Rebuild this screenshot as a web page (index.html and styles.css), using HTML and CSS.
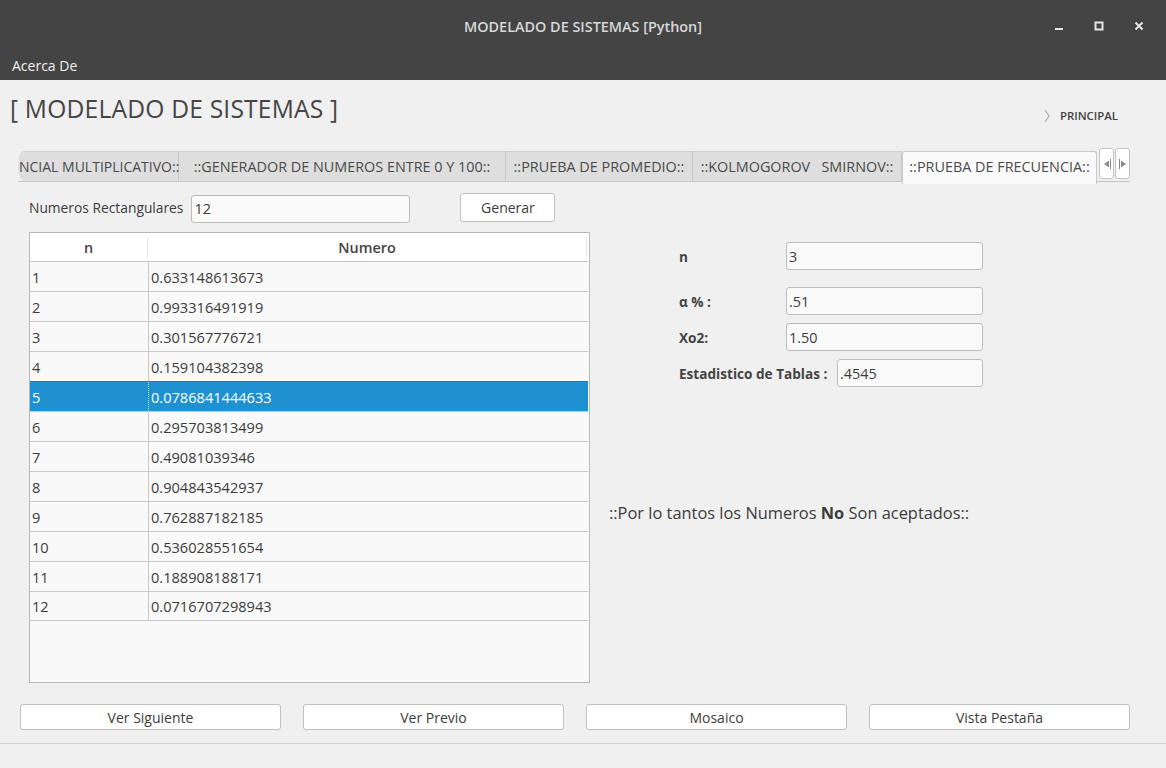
FILE: index.html
```html
<!DOCTYPE html>
<html>
<head>
<meta charset="utf-8">
<link rel="stylesheet" href="styles.css">
</head>
<body>
<div class="window">
  <div class="titlebar">
    <div class="title">MODELADO DE SISTEMAS [Python]</div>
    <div class="controls">
      <svg class="ctl" width="12" height="12" viewBox="0 0 12 12"><rect x="2" y="8" width="8" height="2" fill="#e6e6e6"/></svg>
      <svg class="ctl" width="12" height="12" viewBox="0 0 12 12"><rect x="2.5" y="2.5" width="7" height="7" fill="none" stroke="#e6e6e6" stroke-width="2"/></svg>
      <svg class="ctl" width="12" height="12" viewBox="0 0 12 12"><path d="M2.5 2.5 L9.5 9.5 M9.5 2.5 L2.5 9.5" stroke="#e6e6e6" stroke-width="2"/></svg>
    </div>
  </div>
  <div class="menubar"><span class="menu">Acerca De</span></div>

  <div class="main">
    <div class="head">
      <h1 class="heading">[ MODELADO DE SISTEMAS ]</h1>
      <div class="crumb">
        <svg width="6" height="14" viewBox="0 0 6 14"><path d="M1 1 L5 7 L1 13" fill="none" stroke="#b0b0b0" stroke-width="1.2"/></svg>
        <span>PRINCIPAL</span>
      </div>
    </div>

    <div class="tabbar">
      <div class="tabs">
        <div class="tab first">NCIAL MULTIPLICATIVO::</div>
        <div class="tab t2">::GENERADOR DE NUMEROS ENTRE 0 Y 100::</div>
        <div class="tab t3">::PRUEBA DE PROMEDIO::</div>
        <div class="tab t4">::KOLMOGOROV&nbsp;&nbsp;&nbsp;SMIRNOV::</div>
        <div class="tab active">::PRUEBA DE FRECUENCIA::</div>
      </div>
      <div class="scrollbtns">
        <div class="sbtn"><svg width="8" height="10" viewBox="0 0 8 10"><path d="M1 5 L6 1.5 L6 8.5 Z" fill="#8a8a8a"/><rect x="7" y="0" width="1" height="10" fill="#8a8a8a"/></svg></div>
        <div class="sbtn"><svg width="8" height="10" viewBox="0 0 8 10"><rect x="0" y="0" width="1" height="10" fill="#8a8a8a"/><path d="M2 1.5 L7 5 L2 8.5 Z" fill="#8a8a8a"/></svg></div>
      </div>
    </div>

    <div class="pane">
      <div class="leftcol">
        <div class="genrow">
          <label class="lbl">Numeros Rectangulares</label>
          <div class="field wide">12</div>
          <button class="btn gen">Generar</button>
        </div>
        <div class="table">
          <div class="thead">
            <div class="th c1">n</div>
            <div class="th c2">Numero</div>
          </div>
          <div class="tr"><div class="td c1">1</div><div class="td c2">0.633148613673</div></div>
          <div class="tr"><div class="td c1">2</div><div class="td c2">0.993316491919</div></div>
          <div class="tr"><div class="td c1">3</div><div class="td c2">0.301567776721</div></div>
          <div class="tr"><div class="td c1">4</div><div class="td c2">0.159104382398</div></div>
          <div class="tr sel"><div class="td c1">5</div><div class="td c2">0.0786841444633</div></div>
          <div class="tr"><div class="td c1">6</div><div class="td c2">0.295703813499</div></div>
          <div class="tr"><div class="td c1">7</div><div class="td c2">0.49081039346</div></div>
          <div class="tr"><div class="td c1">8</div><div class="td c2">0.904843542937</div></div>
          <div class="tr"><div class="td c1">9</div><div class="td c2">0.762887182185</div></div>
          <div class="tr"><div class="td c1">10</div><div class="td c2">0.536028551654</div></div>
          <div class="tr"><div class="td c1">11</div><div class="td c2">0.188908188171</div></div>
          <div class="tr"><div class="td c1">12</div><div class="td c2">0.0716707298943</div></div>
        </div>
      </div>
      <div class="rightcol">
        <div class="form">
          <div class="frow r1"><span class="flbl">n</span><div class="field fin">3</div></div>
          <div class="frow r2"><span class="flbl">α % :</span><div class="field fin">.51</div></div>
          <div class="frow r3"><span class="flbl">Xo2:</span><div class="field fin">1.50</div></div>
          <div class="frow r4"><span class="flbl">Estadistico de Tablas :</span><div class="field fin short">.4545</div></div>
        </div>
        <p class="msg">::Por lo tantos los Numeros <b>No</b> Son aceptados::</p>
      </div>
    </div>

    <div class="bottombtns">
      <button class="btn bb">Ver Siguiente</button>
      <button class="btn bb">Ver Previo</button>
      <button class="btn bb">Mosaico</button>
      <button class="btn bb">Vista Pestaña</button>
    </div>
  </div>
  <div class="status"></div>
</div>
</body>
</html>
```

FILE: styles.css
```css
* { box-sizing: border-box; }
html, body { margin: 0; padding: 0; }
body {
  width: 1166px;
  height: 768px;
  overflow: hidden;
  background: #f0f0f0;
  font-family: "Open Sans", "DejaVu Sans", sans-serif;
  color: #3c3c3c;
}
.window { display: flex; flex-direction: column; height: 768px; }

.titlebar {
  height: 52px;
  background: #444444;
  display: flex;
  align-items: center;
  justify-content: center;
  position: relative;
}
.title {
  color: #d8d8d8;
  font-size: 14.4px;
  font-weight: 600;
}
.controls {
  position: absolute;
  right: 21px;
  top: 20px;
  display: flex;
  gap: 28px;
}
.ctl { display: block; }

.menubar {
  height: 28px;
  background: #444444;
  display: flex;
  align-items: center;
  padding: 0 0 2px 12px;
}
.menu { color: #f0f0f0; font-size: 14px; }

.main { flex: 1; display: flex; flex-direction: column; }

.head {
  display: flex;
  justify-content: space-between;
  align-items: flex-start;
  height: 68px;
}
.heading {
  margin: 12px 0 0 10px;
  font-size: 24.6px;
  font-weight: 400;
  color: #454545;
  letter-spacing: 0.2px;
}
.crumb {
  margin: 28px 48px 0 0;
  display: flex;
  align-items: center;
  gap: 10px;
  font-size: 11.4px;
  font-weight: 600;
  color: #444;
}
.crumb svg { display: block; }

.tabbar {
  height: 34px;
  margin: 0 36px 0 18px;
  display: flex;
  align-items: flex-end;
  border-bottom: 1px solid #c4c4c4;
}
.tabs { display: flex; height: 30px; }
.tab {
  height: 30px;
  display: flex;
  align-items: center;
  font-size: 14.4px;
  color: #4a4a4a;
  background: #dedede;
  border-right: 1px solid #c8c8c8;
  border-top: 1px solid #d0d0d0;
  white-space: nowrap;
  padding: 0 6px 1px;
}
.tab.first {
  width: 161px;
  padding: 0 0 1px 1px;
  font-size: 14px;
  border-top-left-radius: 6px 15px;
  border-bottom-left-radius: 6px 15px;
}
.tab.t2 { width: 327px; justify-content: center; }
.tab.t3 { width: 187px; justify-content: center; }
.tab.t4 { width: 209px; justify-content: center; }
.tab.active {
  width: 195px;
  height: 33px;
  margin-bottom: -1px;
  background: #fafafa;
  border: 1px solid #c8c8c8;
  border-bottom: none;
  border-radius: 3px 3px 0 0;
  justify-content: center;
  padding-bottom: 4px;
}
.scrollbtns {
  display: flex;
  gap: 1px;
  margin-left: 2px;
  align-self: flex-start;
}
.sbtn {
  width: 15px;
  height: 31px;
  background: #fff;
  border: 1px solid #c4c4c4;
  border-radius: 3px;
  display: flex;
  align-items: center;
  justify-content: center;
}
.sbtn svg { display: block; }

.pane { display: flex; height: 512px; padding: 11px 0 0 29px; }
.leftcol { width: 561px; display: flex; flex-direction: column; }
.genrow { display: flex; align-items: center; height: 29px; }
.lbl { font-size: 13.8px; color: #3c3c3c; margin-right: 8px; }
.field {
  background: #fafafa;
  border: 1px solid #bdbdbd;
  border-radius: 3px;
  font-size: 14.4px;
  color: #3c3c3c;
  display: flex;
  align-items: center;
  padding-left: 2px;
}
.field.wide { width: 219px; height: 28px; margin-top: 2px; }
.btn {
  font-family: inherit;
  background: #ffffff;
  border: 1px solid #c0c0c0;
  border-radius: 3px;
  font-size: 14px;
  color: #3c3c3c;
  padding: 0;
}
.gen { width: 95px; height: 29px; margin-left: 50px; }

.table {
  margin-top: 10px;
  width: 561px;
  height: 451px;
  border: 1px solid #b8b8b8;
  background: #f9f9f9;
}
.thead { display: flex; height: 28px; background: #fff; }
.th {
  font-size: 14.4px;
  font-weight: 600;
  color: #444;
  display: flex;
  align-items: center;
  justify-content: center;
}
.th.c1 { width: 118px; border-right: 1px solid #e4e4e4; margin: 4px 0; }
.th.c2 { width: 439px; border-right: 1px solid #e4e4e4; margin: 4px 0; }
.tr { display: flex; height: 30px; border-top: 1px solid #c8c8c8; width: 558px; }
.tr:last-child { border-bottom: 1px solid #c8c8c8; }
.td {
  font-size: 14.6px;
  color: #3c3c3c;
  display: flex;
  align-items: center;
  padding-left: 2px;
}
.td.c1 { width: 119px; border-right: 1px solid #c8c8c8; }
.td.c2 { flex: 1; }
.tr.sel { background: #1f91d0; border-top-color: #1a7fb8; }
.tr.sel .td { color: #fff; }
.tr.sel .td.c1 { border-right: 1px dotted #c8e2f2; }

.rightcol { flex: 1; display: flex; flex-direction: column; padding-left: 89px; }
.form { display: flex; flex-direction: column; padding-top: 49px; }
.frow { display: flex; align-items: center; height: 28px; }
.frow.r2 { margin-top: 17px; }
.frow.r3 { margin-top: 8px; }
.frow.r4 { margin-top: 8px; width: 304px; }
.flbl { font-size: 13.6px; font-weight: 700; color: #444; width: 107px; white-space: nowrap; }
.field.fin { width: 197px; height: 28px; }
.frow.r4 .flbl { width: auto; }
.frow.r4 .field.short { width: 146px; margin-left: auto; }
.msg { margin: 114px 0 0 -70px; font-size: 16.4px; color: #3c3c3c; }
.msg b { font-weight: 700; }

.bottombtns { display: flex; gap: 22px; padding: 10px 0 0 20px; }
.bb { width: 261px; height: 26px; }

.status {
  height: 25px;
  border-top: 1px solid #d2d2d2;
  margin-top: 12px;
}
```
